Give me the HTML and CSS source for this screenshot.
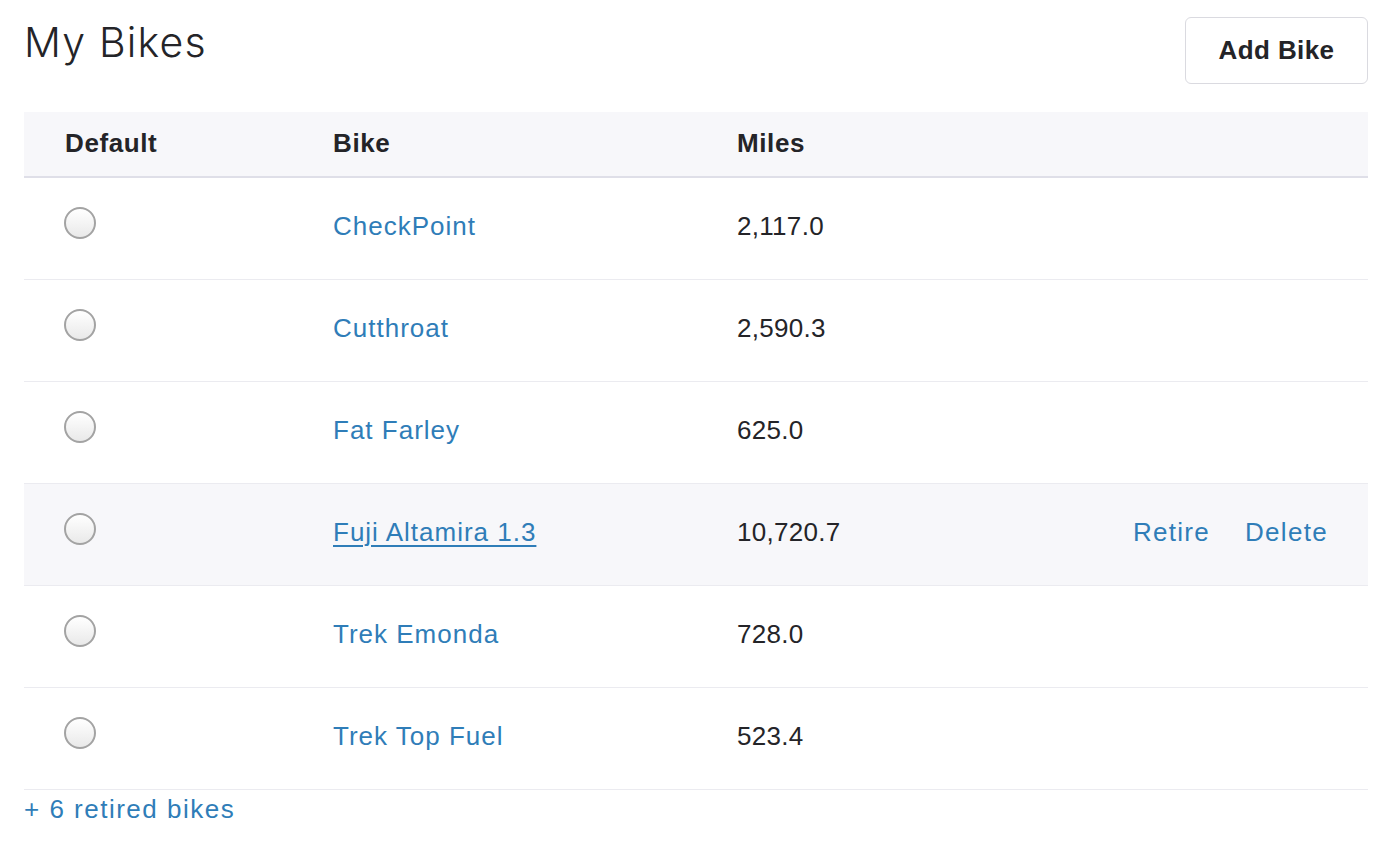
FILE: index.html
```html
<!DOCTYPE html>
<html>
<head>
<meta charset="utf-8">
<link rel="stylesheet" href="styles.css">
</head>
<body>
<div class="page">
  <div class="top">
    <h1 class="title">My Bikes</h1>
    <button class="btn">Add Bike</button>
  </div>
  <div class="table">
    <div class="row head">
      <div class="cell c1">Default</div>
      <div class="cell">Bike</div>
      <div class="cell">Miles</div>
      <div class="cell"></div>
    </div>
    <div class="row">
      <div class="cell c1"><span class="radio"></span></div>
      <div class="cell"><a class="link">CheckPoint</a></div>
      <div class="cell num">2,117.0</div>
      <div class="cell"></div>
    </div>
    <div class="row">
      <div class="cell c1"><span class="radio"></span></div>
      <div class="cell"><a class="link">Cutthroat</a></div>
      <div class="cell num">2,590.3</div>
      <div class="cell"></div>
    </div>
    <div class="row">
      <div class="cell c1"><span class="radio"></span></div>
      <div class="cell"><a class="link">Fat Farley</a></div>
      <div class="cell num">625.0</div>
      <div class="cell"></div>
    </div>
    <div class="row hover">
      <div class="cell c1"><span class="radio"></span></div>
      <div class="cell"><a class="link under">Fuji Altamira 1.3</a></div>
      <div class="cell num">10,720.7</div>
      <div class="cell actions"><a class="link">Retire</a><a class="link">Delete</a></div>
    </div>
    <div class="row">
      <div class="cell c1"><span class="radio"></span></div>
      <div class="cell"><a class="link">Trek Emonda</a></div>
      <div class="cell num">728.0</div>
      <div class="cell"></div>
    </div>
    <div class="row">
      <div class="cell c1"><span class="radio"></span></div>
      <div class="cell"><a class="link">Trek Top Fuel</a></div>
      <div class="cell num">523.4</div>
      <div class="cell"></div>
    </div>
  </div>
  <a class="link retired">+ 6 retired bikes</a>
</div>
</body>
</html>
```
FILE: styles.css
```css
html, body {
  margin: 0;
  padding: 0;
  background: #ffffff;
}
body {
  font-family: "Liberation Sans", Arial, sans-serif;
  color: #242428;
  font-size: 26px;
}
.page {
  padding: 0 17px 0 24px;
}
.top {
  display: flex;
  justify-content: space-between;
  align-items: flex-start;
  height: 112px;
}
.title {
  margin: 0;
  padding-top: 16px;
  font-family: "Inter", sans-serif;
  font-weight: 300;
  font-size: 41px;
  line-height: 52px;
  color: #242428;
  letter-spacing: 1.2px;
}
.btn {
  margin-top: 17px;
  width: 183px;
  height: 67px;
  border: 1px solid #dadae0;
  border-radius: 6px;
  background: #ffffff;
  font-family: "Liberation Sans", Arial, sans-serif;
  font-weight: 700;
  font-size: 26px;
  letter-spacing: 0.4px;
  color: #242428;
  padding: 0;
}
.row {
  display: grid;
  grid-template-columns: 309px 404px 1fr auto;
  align-items: center;
  height: 101px;
  border-bottom: 1px solid #ebebf0;
}
.row.head {
  height: 64px;
  background: #f7f7fa;
  border-bottom: 2px solid #dfdfe8;
  font-weight: 700;
  letter-spacing: 0.6px;
}
.row.head .cell {
  padding-bottom: 3px;
}
.row.hover {
  background: #f7f7fa;
}
.cell {
  line-height: 30px;
}
.row:not(.head) .cell {
  padding-bottom: 6px;
}
.c1 {
  padding-left: 41px;
}
.radio {
  display: block;
  width: 28px;
  height: 28px;
  margin-left: -1px;
  border: 2px solid #a3a3a3;
  border-radius: 50%;
  background: linear-gradient(#ffffff, #e9e9e9);
  margin-bottom: 6px;
}
.link {
  color: #2f7db8;
  text-decoration: none;
  letter-spacing: 1px;
}
.link.under {
  text-decoration: underline;
  text-underline-offset: 4px;
  text-decoration-thickness: 2px;
}
.num {
  letter-spacing: 0.3px;
}
.actions {
  display: flex;
  gap: 35px;
  padding-right: 40px;
}
.actions .link {
  letter-spacing: 1.3px;
}
.retired {
  display: block;
  margin-top: 4px;
  line-height: 30px;
  letter-spacing: 1.5px;
}
```
